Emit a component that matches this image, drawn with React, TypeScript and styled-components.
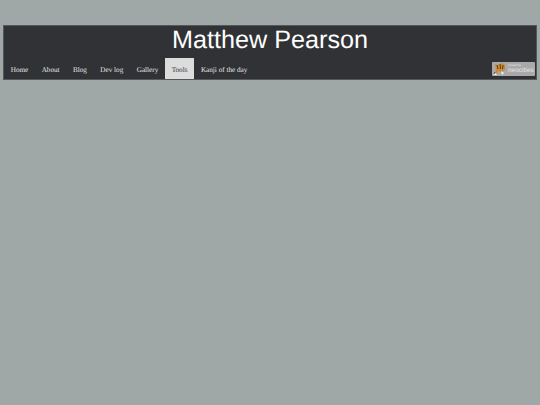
import React from 'react';
import styled, { createGlobalStyle } from 'styled-components';

const GlobalStyle = createGlobalStyle`
  html, body {
    margin: 0;
    padding: 0;
    background-color: #9fa8a6;
    text-rendering: geometricPrecision;
  }
`;

const Page = styled.div`
  padding: 25px 3px 0;
`;

const Header = styled.header`
  background-color: #303236;
  border: 1px solid #55585a;
  box-sizing: border-box;
  height: 55px;
  display: flex;
  flex-direction: column;
`;

const Title = styled.h1`
  margin: 0;
  height: 32px;
  line-height: 28px;
  text-align: center;
  font-family: "Liberation Sans", Arial, sans-serif;
  font-size: 25.2px;
  font-weight: 400;
  color: #ffffff;
`;

const NavBar = styled.nav`
  display: flex;
  align-items: stretch;
  flex: 1;
`;

const NavItem = styled.a<{ $active?: boolean }>`
  display: flex;
  align-items: center;
  padding: 2px 6.7px 0;
  font-family: "Liberation Serif", "Times New Roman", serif;
  font-size: 7.2px;
  color: ${({ $active }) => ($active ? '#303236' : '#e6e6e6')};
  background-color: ${({ $active }) => ($active ? '#dcdcdc' : 'transparent')};
`;

const Badge = styled.div`
  margin: 4px 1px 1px auto;
  width: 43px;
  height: 14px;
  background-color: #a9a9a9;
  border-radius: 1px;
  display: flex;
  align-items: center;
  overflow: hidden;
`;

const BadgeText = styled.div`
  display: flex;
  flex-direction: column;
  font-family: "Liberation Sans", Arial, sans-serif;
  color: #e8e8e8;
  margin-left: 1px;
`;

const BadgeSmall = styled.span`
  font-size: 3px;
  line-height: 3px;
`;

const BadgeName = styled.span`
  font-size: 6.5px;
  line-height: 7px;
`;

const links = ['Home', 'About', 'Blog', 'Dev log', 'Gallery', 'Tools', 'Kanji of the day'];

const CatLogo = () => (
  <svg width="15" height="14" viewBox="0 0 15 14">
    <path d="M2 13 L4 8 L3 2 L6 3 L10 1 L13 3 L13 8 L9 10 L6 9 L5 13 Z" fill="#c98a35" />
    <path d="M5 3 L6 7 M8 2 L8.5 7 M11 3 L10.5 7" stroke="#5a3a1a" strokeWidth="1" fill="none" />
    <path d="M1 13 L4 11 L5 13 Z M9 9 L12 11 L10 13 Z" fill="#f2f2f2" />
    <path d="M2 12 L3 10" stroke="#333" strokeWidth="0.7" />
  </svg>
);

const App: React.FC = () => {
  return (
    <>
      <GlobalStyle />
      <Page>
        <Header>
          <Title>Matthew Pearson</Title>
          <NavBar>
            {links.map((link) => (
              <NavItem key={link} $active={link === 'Tools'}>
                {link}
              </NavItem>
            ))}
            <Badge>
              <CatLogo />
              <BadgeText>
                <BadgeSmall>hosted by</BadgeSmall>
                <BadgeName>neocities</BadgeName>
              </BadgeText>
            </Badge>
          </NavBar>
        </Header>
      </Page>
    </>
  );
};

export default App;
